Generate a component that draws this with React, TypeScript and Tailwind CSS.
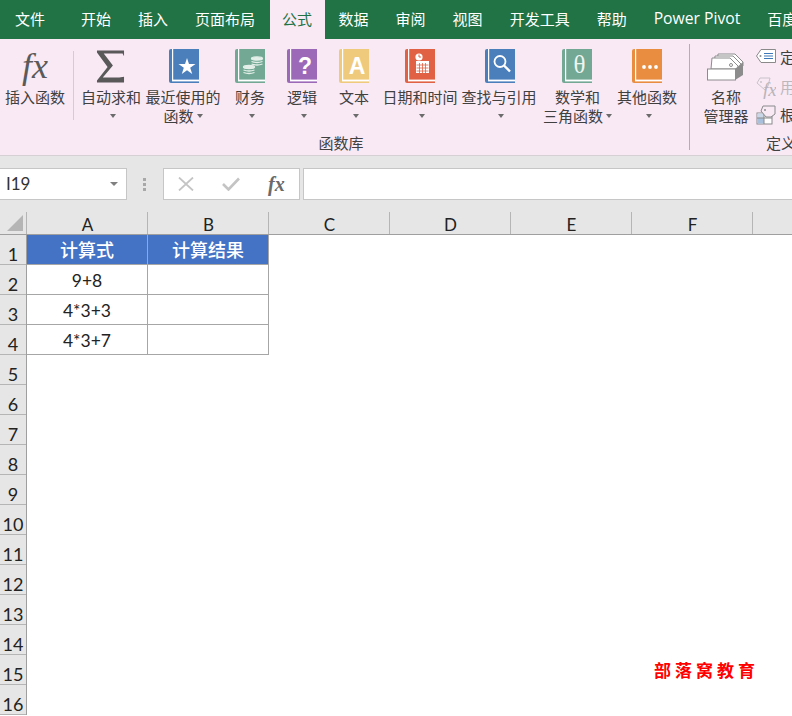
import React from "react";

const Caret = () => (
  <span className="inline-block w-0 h-0 border-x-[3px] border-t-[4px] border-x-transparent border-t-[#6b6b6b] align-middle" />
);

function Book({ color, children }: { color: string; children?: React.ReactNode }) {
  return (
    <svg width="30" height="34" viewBox="0 0 30 34" className="block">
      <path d="M2 0H30V34H2Q0 34 0 32V2Q0 0 2 0Z" fill={color} />
      <rect x="3" y="0" width="1.2" height="31" fill="#fff" />
      <rect x="3" y="30.6" width="27" height="1.8" fill="#fff" />
      {children}
    </svg>
  );
}

function RibbonButton({ width, icon, line1, line2, iconClass = "" }: { width: string; icon: React.ReactNode; line1: string; line2?: string; iconClass?: string }) {
  return (
    <div className={`${width} shrink-0 flex flex-col items-center pt-[10px]`}>
      <div className={`h-[34px] flex items-center justify-center ${iconClass}`}>{icon}</div>
      <div className="mt-[4px] h-[19px] leading-[19px] whitespace-nowrap">{line1}</div>
      <div className="h-[19px] leading-[19px] whitespace-nowrap flex items-center gap-[3px]">
        {line2 ? <span>{line2}</span> : <span className="w-[1px]" />}
        <Caret />
      </div>
    </div>
  );
}

const tabs = ["开始", "插入", "页面布局", "公式", "数据", "审阅", "视图", "开发工具", "帮助", "Power Pivot", "百度"];

const serif = "font-['Liberation_Serif',serif]";

function TagIcon() {
  return (
    <svg width="20" height="14" viewBox="0 0 20 14" className="block">
      <path d="M5 .5H19.5V13.5H5L.5 7Z" fill="#fff" stroke="#8a8a8a" />
      <circle cx="4.5" cy="7" r="1" fill="#8a8a8a" />
      <path d="M8 4.5H17M8 7H17M8 9.5H17" stroke="#3f78b8" strokeWidth="1.1" />
    </svg>
  );
}

function FxTagIcon() {
  return (
    <svg width="20" height="22" viewBox="0 0 20 22" className="block">
      <path d="M4 1H14L12 9L9 13L1 6Z" fill="none" stroke="#c9c3c9" />
      <circle cx="5" cy="5" r="1" fill="#c9c3c9" />
      <text x="7" y="19" fontFamily="Liberation Serif" fontStyle="italic" fontSize="19" fill="#b9b4b9">fx</text>
    </svg>
  );
}

function TableTagIcon() {
  return (
    <svg width="20" height="20" viewBox="0 0 20 20" className="block">
      <rect x="1" y="8" width="15" height="11" fill="#fff" stroke="#8a8a8a" />
      <rect x="1.5" y="13" width="6.5" height="5.5" fill="#a9c0dc" />
      <rect x="1.5" y="8.5" width="6.5" height="4.5" fill="#c9d7e8" />
      <path d="M8 8V19M1 13H16" stroke="#8a8a8a" />
      <path d="M7 1H19V9L15 12H10L5 6Z" fill="#f8e9f5" stroke="#8a8a8a" />
      <circle cx="9" cy="5" r="1" fill="#8a8a8a" />
    </svg>
  );
}

function NameManagerIcon() {
  return (
    <svg width="38" height="28" viewBox="0 0 38 28" className="block">
      <path d="M11 1H28L36 9V13L30 15H10Z" fill="#fff" stroke="#8c8c8c" />
      <path d="M8 3H26L34 11V14L28 16H7Z" fill="#fff" stroke="#8c8c8c" />
      <path d="M5 5H23L31 13V16H4Z" fill="#fff" stroke="#8c8c8c" />
      <circle cx="24" cy="12" r="1.5" fill="none" stroke="#8c8c8c" />
      <path d="M28 16L36 9V22L28 27Z" fill="#8c8c8c" />
      <rect x="0.5" y="16" width="28" height="11" fill="#fff" stroke="#8c8c8c" />
    </svg>
  );
}

const rowNums = Array.from({ length: 16 }, (_, i) => i + 1);
const colsRest = ["C", "D", "E", "F", "G"];

const data: [string, string][] = [
  ["9+8", ""],
  ["4*3+3", ""],
  ["4*3+7", ""],
];

export default function App() {
  return (
    <div className="relative w-[792px] h-[716px] overflow-hidden bg-white text-[15px] text-[#404040] font-['Noto_Sans_CJK_SC','Noto_Sans',sans-serif]">
      {/* tab bar */}
      <div className="h-[39px] bg-[#217346] flex text-white whitespace-nowrap overflow-hidden">
        <div className="pl-[15px] pr-[8px] mr-[14.5px] leading-[37px] shrink-0">文件</div>
        {tabs.map((t) => (
          <div
            key={t}
            className={
              t === "公式"
                ? "shrink-0 ml-[1.5px] pl-[12px] pr-[13px] leading-[37px] bg-[#f8e9f5] text-[#217346]"
                : `shrink-0 px-[13.5px] leading-[37px] ${t === "Power Pivot" ? "font-['Open_Sans',sans-serif] text-[15.7px]" : ""}`
            }
          >
            {t}
          </div>
        ))}
      </div>

      {/* ribbon */}
      <div className="h-[117px] bg-[#f8e9f5] border-b border-[#d6d0d5] flex overflow-hidden">
        <div className="w-[682px] shrink-0 flex flex-col">
          <div className="flex h-[94px]">
            <div className="w-[73px] shrink-0 flex flex-col items-center pt-[10px] pr-[3px]">
              <div className={`h-[34px] leading-[34px] text-[36px] italic text-[#5a5a5a] ${serif}`}>fx</div>
              <div className="mt-[4px] h-[19px] leading-[19px] whitespace-nowrap">插入函数</div>
            </div>
            <div className="w-px h-[69px] mt-[12px] bg-[#d3ccd2] shrink-0" />
            <RibbonButton
              width="w-[74px]"
              line1="自动求和"
              iconClass="-ml-[2px]"
              icon={
                <svg width="29" height="33" viewBox="0 0 30 33" className="block">
                  <path d="M1 0H29V6L27.5 3H8L17.5 15.5L7 28H24L29 27V33H1V31L12 17L1 2Z" fill="#595959" />
                </svg>
              }
            />
            <RibbonButton
              width="w-[70px]"
              line1="最近使用的"
              line2="函数"
              iconClass="ml-[1px]"
              icon={
                <Book color="#4a7fbc">
                  <polygon points="18,9 20,15 26.5,15 21.2,18.8 23.2,25 18,21.2 12.8,25 14.8,18.8 9.5,15 16,15" fill="#fff" />
                </Book>
              }
            />
            <RibbonButton
              width="w-[64px]"
              line1="财务"
              icon={
                <Book color="#72a894">
                  <g fill="none" stroke="#e4efe9" strokeWidth="1.3">
                    <ellipse cx="22" cy="9.5" rx="5.5" ry="1.6" fill="#e4efe9" />
                    <path d="M16.5 12.5Q22 14.5 27.5 12.5M16.5 15Q22 17 27.5 15" />
                    <ellipse cx="14" cy="18" rx="5.5" ry="1.6" fill="#e4efe9" />
                    <path d="M8.5 21Q14 23 19.5 21M8.5 23.5Q14 25.5 19.5 23.5" />
                  </g>
                </Book>
              }
            />
            <RibbonButton
              width="w-[40px]"
              line1="逻辑"
              icon={
                <Book color="#9c68b8">
                  <text x="18" y="25" textAnchor="middle" fontFamily="Liberation Sans" fontWeight="700" fontSize="23" fill="#fff">?</text>
                </Book>
              }
            />
            <RibbonButton
              width="w-[64px]"
              line1="文本"
              icon={
                <Book color="#f0ca7c">
                  <text x="18" y="25" textAnchor="middle" fontFamily="Liberation Sans" fontWeight="700" fontSize="23" fill="#fff">A</text>
                </Book>
              }
            />
            <RibbonButton
              width="w-[68px]"
              line1="日期和时间"
              icon={
                <Book color="#e06144">
                  <circle cx="14" cy="8" r="3.6" fill="#fff" />
                  <path d="M14 5.5V8H16" stroke="#e06144" strokeWidth="1" fill="none" />
                  <rect x="11" y="12" width="13" height="12" fill="#fff" />
                  <path d="M11.5 16H23.5M11.5 19H23.5M11.5 22H23.5M14.5 14V24M17.5 14V24M20.5 14V24" stroke="#e06144" strokeWidth=".8" />
                </Book>
              }
            />
            <RibbonButton
              width="w-[90px]"
              line1="查找与引用"
              iconClass="ml-[1px]"
              icon={
                <Book color="#4a7fbc">
                  <circle cx="15" cy="12.5" r="5.5" fill="none" stroke="#fff" strokeWidth="1.8" />
                  <path d="M19 16.5L25 22.5" stroke="#fff" strokeWidth="2.4" />
                </Book>
              }
            />
            <RibbonButton
              width="w-[67px]"
              line1="数学和"
              line2="三角函数"
              iconClass="-ml-[1px]"
              icon={
                <Book color="#72a894">
                  <text x="17.5" y="24" textAnchor="middle" fontFamily="Liberation Serif" fontSize="25" fill="#eef5f1">θ</text>
                </Book>
              }
            />
            <RibbonButton
              width="w-[72px]"
              line1="其他函数"
              icon={
                <Book color="#e98d40">
                  <circle cx="12" cy="18" r="1.9" fill="#fff" />
                  <circle cx="18" cy="18" r="1.9" fill="#fff" />
                  <circle cx="24" cy="18" r="1.9" fill="#fff" />
                </Book>
              }
            />
          </div>
          <div className="h-[21px] leading-[19px] text-center">函数库</div>
        </div>
        <div className="w-px h-[106px] mt-[5px] ml-[7px] bg-[#b4aeb3] shrink-0" />
        <div className="shrink-0 flex flex-col">
          <div className="flex h-[94px]">
            <div className="w-[66px] pl-[6px] shrink-0 flex flex-col items-center pt-[14px]">
              <NameManagerIcon />
              <div className="mt-[6px] h-[19px] leading-[19px]">名称</div>
              <div className="h-[19px] leading-[19px] whitespace-nowrap">管理器</div>
            </div>
            <div className="flex flex-col pt-[10px] whitespace-nowrap">
              <div className="h-[28px] flex items-start gap-[4px]">
                <TagIcon />
                <span className="leading-[16px]">定义名称</span>
              </div>
              <div className="h-[28px] flex items-start gap-[4px] text-[#bdb7bc]">
                <FxTagIcon />
                <span className="leading-[20px]">用于公式</span>
              </div>
              <div className="flex items-start gap-[4px]">
                <TableTagIcon />
                <span className="leading-[19px]">根据所选内容创建</span>
              </div>
            </div>
          </div>
          <div className="h-[21px] leading-[19px] pl-[76px] whitespace-nowrap">定义的名称</div>
        </div>
      </div>

      {/* formula bar */}
      <div className="h-[56px] bg-[#e6e6e6] flex items-start pt-[12px]">
        <div className="w-[127px] h-[32px] bg-white border border-l-0 border-[#c6c6c6] flex items-center justify-between pl-[6px] pr-[8px] font-['Lato',sans-serif] text-[17px] text-[#333]">
          <span>I19</span>
          <span className="inline-block w-0 h-0 border-x-[4px] border-t-[4px] border-x-transparent border-t-[#808080]" />
        </div>
        <div className="w-[35px] mr-[1px] h-[32px] flex flex-col items-center justify-center gap-[2px]">
          <span className="w-[3px] h-[3px] bg-[#a8a8a8]" />
          <span className="w-[3px] h-[3px] bg-[#a8a8a8]" />
          <span className="w-[3px] h-[3px] bg-[#a8a8a8]" />
        </div>
        <div className="w-[137px] h-[32px] bg-white border border-[#c6c6c6] flex items-center">
          <div className="w-[44px] flex justify-center">
            <svg width="16" height="14" viewBox="0 0 16 14"><path d="M1 .5L15 13.5M15 .5L1 13.5" stroke="#c4c4c4" strokeWidth="1.8" /></svg>
          </div>
          <div className="w-[46px] flex justify-center">
            <svg width="18" height="14" viewBox="0 0 18 14"><path d="M1 7L6.5 12.5L17 1.5" fill="none" stroke="#c4c4c4" strokeWidth="2.6" /></svg>
          </div>
          <span className={`${serif} italic font-bold text-[20px] leading-none text-[#6a6a6a] pl-[14px]`}>fx</span>
        </div>
        <div className="ml-[3px] flex-1 h-[32px] bg-white border border-r-0 border-[#c6c6c6]" />
      </div>

      {/* column headers */}
      <div className="h-[23px] flex bg-[#e6e6e6] border-b border-[#9f9f9f] font-['Lato',sans-serif] text-[17px] text-[#222]">
        <div className="w-[27px] shrink-0 border-r border-[#b5b5b5] relative">
          <svg width="16" height="16" viewBox="0 0 16 16" className="absolute left-[7px] top-[3px]"><polygon points="16,0 16,16 0,16" fill="#b5b5b5" /></svg>
        </div>
        {["A", "B", ...colsRest].map((c) => (
          <div key={c} className="w-[121px] pl-[1px] shrink-0 border-r border-[#b5b5b5] text-center leading-[26px]">
            {c}
          </div>
        ))}
      </div>

      {/* sheet */}
      <div className="flex font-['Lato',sans-serif] text-[18px] text-[#222]">
        <div className="w-[27px] shrink-0 bg-[#e6e6e6] border-r border-[#9f9f9f]">
          {rowNums.map((n) => (
            <div key={n} className="h-[30px] border-b border-[#b5b5b5] text-center leading-[39px] overflow-hidden">
              {n}
            </div>
          ))}
        </div>
        <div className="grid grid-cols-[121px_121px] auto-rows-[30px] content-start">
          <div className="bg-[#4472c4] border-r border-b border-[#a6a6a6] text-white text-center leading-[29px] font-['Noto_Sans_CJK_SC',sans-serif] font-medium">计算式</div>
          <div className="bg-[#4472c4] border-r border-b border-[#a6a6a6] text-white text-center leading-[29px] font-['Noto_Sans_CJK_SC',sans-serif] font-medium">计算结果</div>
          {data.map(([a, b]) => (
            <React.Fragment key={a}>
              <div className="border-r border-b border-[#a6a6a6] text-center leading-[31px] text-[17.5px]">{a}</div>
              <div className="border-r border-b border-[#a6a6a6] text-center leading-[31px]">{b}</div>
            </React.Fragment>
          ))}
        </div>
      </div>

      {/* watermark */}
      <div className="absolute left-[654px] top-[659px] text-[17px] leading-[22px] font-bold tracking-[4px] text-[#ff0000] whitespace-nowrap">
        部落窝教育
      </div>
    </div>
  );
}
